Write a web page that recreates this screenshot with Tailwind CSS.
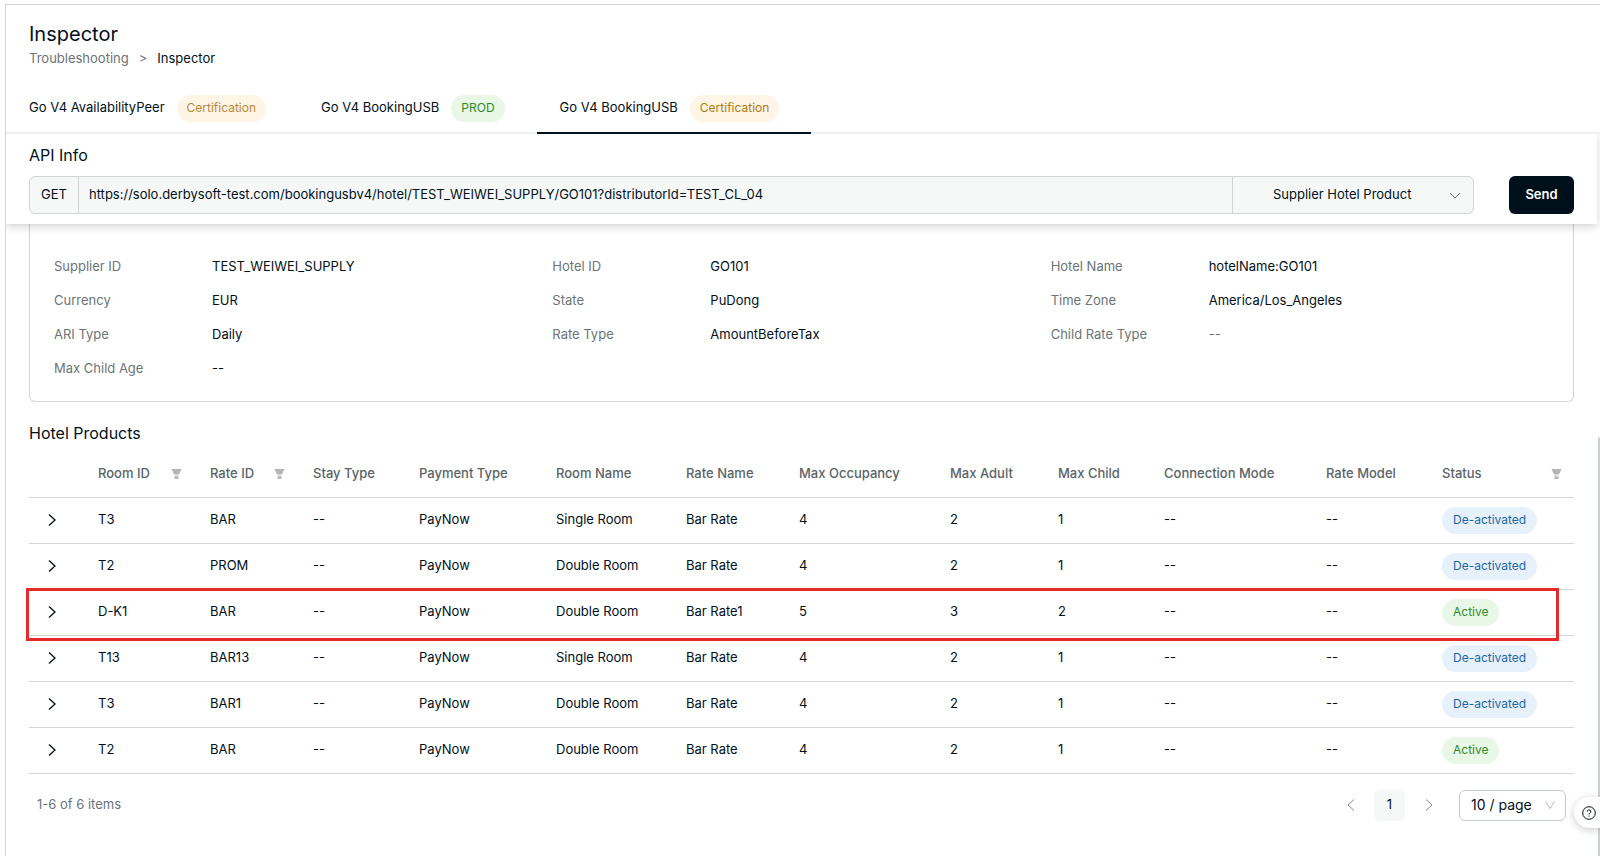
<!DOCTYPE html>
<html lang="en">

<head>
    <meta charset="UTF-8">
    <meta name="viewport" content="width=device-width, initial-scale=1.0">
    <script src="https://cdn.jsdelivr.net/npm/@tailwindcss/browser@4"></script>
    <title>Inspector</title>
</head>

<body class="bg-white font-['Inter',sans-serif] text-[13px] text-[#00101a] overflow-hidden">
    <div class="mt-1 ml-[5px] min-h-screen border-t border-l border-[#d0d5d6]">
        <header class="px-[23px] pt-[17px]">
            <h1 class="text-xl leading-6">Inspector</h1>
            <nav aria-label="Breadcrumb" class="flex gap-2.5 leading-6 text-[#6b7478]">
                <a href="#">Troubleshooting</a>
                <span>&gt;</span>
                <a href="#" class="text-[#00101a]">Inspector</a>
            </nav>
        </header>

        <nav aria-label="Suppliers" class="mt-3 flex border-b-2 border-[#eeefef]">
            <a href="#" class="-mb-0.5 flex h-[52px] items-center gap-3 border-b-2 border-transparent pt-0.5 pr-8 pl-[23px]">
                Go V4 AvailabilityPeer
                <span class="flex h-[27px] items-center rounded-full bg-[#fff5e6] px-2.5 text-xs text-[#b98a35]">Certification</span>
            </a>
            <a href="#" class="-mb-0.5 flex h-[52px] items-center gap-3 border-b-2 border-transparent pt-0.5 pr-8 pl-[23px]">
                Go V4 BookingUSB
                <span class="flex h-[27px] items-center rounded-full bg-[#e8f7e6] px-2.5 text-xs text-[#2f8a2b]">PROD</span>
            </a>
            <a href="#" class="-mb-0.5 flex h-[52px] items-center gap-3 border-b-2 border-[#00101a] pt-0.5 pr-8 pl-[23px]">
                Go V4 BookingUSB
                <span class="flex h-[27px] items-center rounded-full bg-[#fff5e6] px-2.5 text-xs text-[#ad7a10]">Certification</span>
            </a>
        </nav>

        <section class="relative mr-[3px] bg-white px-[23px] pt-[9px] pb-2.5 shadow-[0_3px_8px_rgba(0,0,0,0.17)] [clip-path:inset(0_-8px_-14px_0)]">
            <h2 class="text-base leading-6">API Info</h2>
            <form class="mt-[9px] flex items-center gap-[35px]" onsubmit="return false">
                <div class="flex h-[38px] flex-1 rounded-md border border-[#d0d5d6] bg-[#f6f8f8]">
                    <label for="url" class="flex w-[49px] items-center justify-center border-r border-[#d0d5d6]">GET</label>
                    <input id="url" type="text" class="min-w-0 flex-1 px-2.5"
                        value="https://solo.derbysoft-test.com/bookingusbv4/hotel/TEST_WEIWEI_SUPPLY/GO101?distributorId=TEST_CL_04">
                    <div class="relative w-[241px] border-l border-[#d0d5d6]">
                        <select aria-label="API" class="h-full w-full appearance-none pr-14 pl-10">
                            <option>Supplier Hotel Product</option>
                        </select>
                        <svg class="pointer-events-none absolute top-3 right-3 size-3" viewBox="0 0 12 12" fill="none" stroke="#5f686c">
                            <path d="M1 4l5 5L11 4" />
                        </svg>
                    </div>
                </div>
                <button type="submit" class="h-[38px] w-[65px] rounded-md bg-[#00101a] font-semibold text-white">Send</button>
            </form>
        </section>

        <main class="pr-[26px] pl-[23px]">
            <dl class="grid grid-cols-3 rounded-b-md border border-t-0 border-[#d0d5d6] px-6 pt-[25px] pb-4 leading-[34px]">
                <div class="flex">
                    <dt class="w-[158px] text-[#6b7478]">Supplier ID</dt>
                    <dd>TEST_WEIWEI_SUPPLY</dd>
                </div>
                <div class="flex">
                    <dt class="w-[158px] text-[#6b7478]">Hotel ID</dt>
                    <dd>GO101</dd>
                </div>
                <div class="flex">
                    <dt class="w-[158px] text-[#6b7478]">Hotel Name</dt>
                    <dd>hotelName:GO101</dd>
                </div>
                <div class="flex">
                    <dt class="w-[158px] text-[#6b7478]">Currency</dt>
                    <dd>EUR</dd>
                </div>
                <div class="flex">
                    <dt class="w-[158px] text-[#6b7478]">State</dt>
                    <dd>PuDong</dd>
                </div>
                <div class="flex">
                    <dt class="w-[158px] text-[#6b7478]">Time Zone</dt>
                    <dd>America/Los_Angeles</dd>
                </div>
                <div class="flex">
                    <dt class="w-[158px] text-[#6b7478]">ARI Type</dt>
                    <dd>Daily</dd>
                </div>
                <div class="flex">
                    <dt class="w-[158px] text-[#6b7478]">Rate Type</dt>
                    <dd>AmountBeforeTax</dd>
                </div>
                <div class="flex">
                    <dt class="w-[158px] text-[#6b7478]">Child Rate Type</dt>
                    <dd class="text-[#6b7478]">--</dd>
                </div>
                <div class="flex">
                    <dt class="w-[158px] text-[#6b7478]">Max Child Age</dt>
                    <dd>--</dd>
                </div>
            </dl>

            <h2 class="mt-[19px] text-base leading-6">Hotel Products</h2>
            <table class="mt-1.5 w-full table-fixed text-left">
                <colgroup>
                    <col class="w-[57px]">
                    <col class="w-[112px]">
                    <col class="w-[103px]">
                    <col class="w-[106px]">
                    <col class="w-[137px]">
                    <col class="w-[130px]">
                    <col class="w-[113px]">
                    <col class="w-[151px]">
                    <col class="w-[108px]">
                    <col class="w-[106px]">
                    <col class="w-[162px]">
                    <col class="w-[116px]">
                    <col class="w-[144px]">
                </colgroup>
                <thead>
                    <tr id="headings" class="h-[46px] border-b border-[#d0d5d6] text-[#5a6468]"></tr>
                </thead>
                <tbody id="products"></tbody>
            </table>

            <footer class="flex items-center justify-between px-2 py-4">
                <p class="text-[#6b7478]">1-6 of 6 items</p>
                <div class="flex items-center">
                    <button type="button" aria-label="Previous page" class="flex h-[31px] w-[31px] items-center justify-center">
                        <svg class="size-3" viewBox="0 0 12 12" fill="none" stroke="#7f878a">
                            <path d="M9 0.5L3 6l6 5.5" />
                        </svg>
                    </button>
                    <button type="button" class="mx-2 h-[31px] w-[31px] rounded-md bg-[#f6f8f8]">1</button>
                    <button type="button" aria-label="Next page" class="flex h-[31px] w-[31px] items-center justify-center">
                        <svg class="size-3" viewBox="0 0 12 12" fill="none" stroke="#7f878a">
                            <path d="M3 0.5L9 6l-6 5.5" />
                        </svg>
                    </button>
                    <div class="relative ml-[15px] h-[31px] w-[107px]">
                        <select aria-label="Page size" class="h-full w-full appearance-none rounded-md border border-[#c3caca] pl-[11px] text-sm">
                            <option>10 / page</option>
                        </select>
                        <svg class="pointer-events-none absolute top-2.5 right-2.5 size-3" viewBox="0 0 12 12" fill="none" stroke="#b5babc">
                            <path d="M1.5 1.5L6 8.5L10.5 1.5" />
                        </svg>
                    </div>
                </div>
            </footer>
        </main>
    </div>

    <!-- scroll thumb -->
    <div class="fixed top-[437px] right-0 bottom-0 w-0.5 rounded-t bg-[#c9d1d6]"></div>

    <button type="button" aria-label="Help"
        class="fixed right-0 bottom-7 flex h-[31px] w-[26px] items-center justify-end rounded-l-full bg-white pr-1 shadow-[0_2px_8px_rgba(0,0,0,0.2)]">
        <svg class="size-3.5" viewBox="0 0 14 14" fill="none" stroke="#00101a">
            <circle cx="7" cy="7" r="6.3" />
            <path d="M5.2 5.7a1.8 1.7 0 1 1 2.7 1.400c-.6.35-.9.6-.9 1.200v.3M7 9.6v1" />
        </svg>
    </button>
</body>
<script>
    const headings = ['', 'Room ID', 'Rate ID', 'Stay Type', 'Payment Type', 'Room Name', 'Rate Name',
        'Max Occupancy', 'Max Adult', 'Max Child', 'Connection Mode', 'Rate Model', 'Status'];
    const filters = ['Room ID', 'Rate ID', 'Status'];
    const products = [
        ['T3', 'BAR', '--', 'PayNow', 'Single Room', 'Bar Rate', 4, 2, 1, '--', '--', 'De-activated'],
        ['T2', 'PROM', '--', 'PayNow', 'Double Room', 'Bar Rate', 4, 2, 1, '--', '--', 'De-activated'],
        ['D-K1', 'BAR', '--', 'PayNow', 'Double Room', 'Bar Rate1', 5, 3, 2, '--', '--', 'Active'],
        ['T13', 'BAR13', '--', 'PayNow', 'Single Room', 'Bar Rate', 4, 2, 1, '--', '--', 'De-activated'],
        ['T3', 'BAR1', '--', 'PayNow', 'Double Room', 'Bar Rate', 4, 2, 1, '--', '--', 'De-activated'],
        ['T2', 'BAR', '--', 'PayNow', 'Double Room', 'Bar Rate', 4, 2, 1, '--', '--', 'Active'],
    ];
    const badges = {
        'De-activated': 'bg-[#e6f1fc] text-[#1f66a5]',
        'Active': 'bg-[#e8f7e6] text-[#2f8a2b]',
    };

    const filterButton = `
        <button type="button" aria-label="Filter">
            <svg class="h-[10px] w-[11px]" viewBox="0 0 11 10" fill="#b5b5b5">
                <path d="M0.5 0h10L8 5.5H3zM3.500 7.300h4V10h-4z" />
                <path d="M3.5 5.5h4v2h-4z" fill="#dcdcdc" />
            </svg>
        </button>`;

    document.getElementById('headings').innerHTML = headings.map((name) => `
        <th class="pl-3 font-medium ${name === 'Status' ? 'pr-3' : 'pr-4'}">
            <div class="flex items-center justify-between whitespace-nowrap">${name}${filters.includes(name) ? filterButton : ''}</div>
        </th>`).join('');

    document.getElementById('products').innerHTML = products.map((row) => {
        const status = row[row.length - 1];
        const highlight = row[0] === 'D-K1'
            ? '<span class="pointer-events-none absolute -top-px right-[15px] -bottom-[7px] -left-[3px] border-3 border-[#e52a2a]"></span>'
            : '';
        return `
            <tr class="relative h-[46px] border-b border-[#d0d5d6]">
                <td class="pl-[17px]">
                    <button type="button" aria-label="Expand" class="block">
                        <svg class="size-3" viewBox="0 0 12 12" fill="none" stroke="#00101a" stroke-width="1.3">
                            <path d="M3 0.5L9 6l-6 5.5" />
                        </svg>
                    </button>${highlight}
                </td>
                ${row.slice(0, -1).map((value) => `<td class="px-3">${value}</td>`).join('')}
                <td class="px-3">
                    <span class="inline-flex h-[27px] items-center rounded-full px-[11px] align-middle text-xs ${badges[status]}">${status}</span>
                </td>
            </tr>`;
    }).join('');
</script>

</html>
